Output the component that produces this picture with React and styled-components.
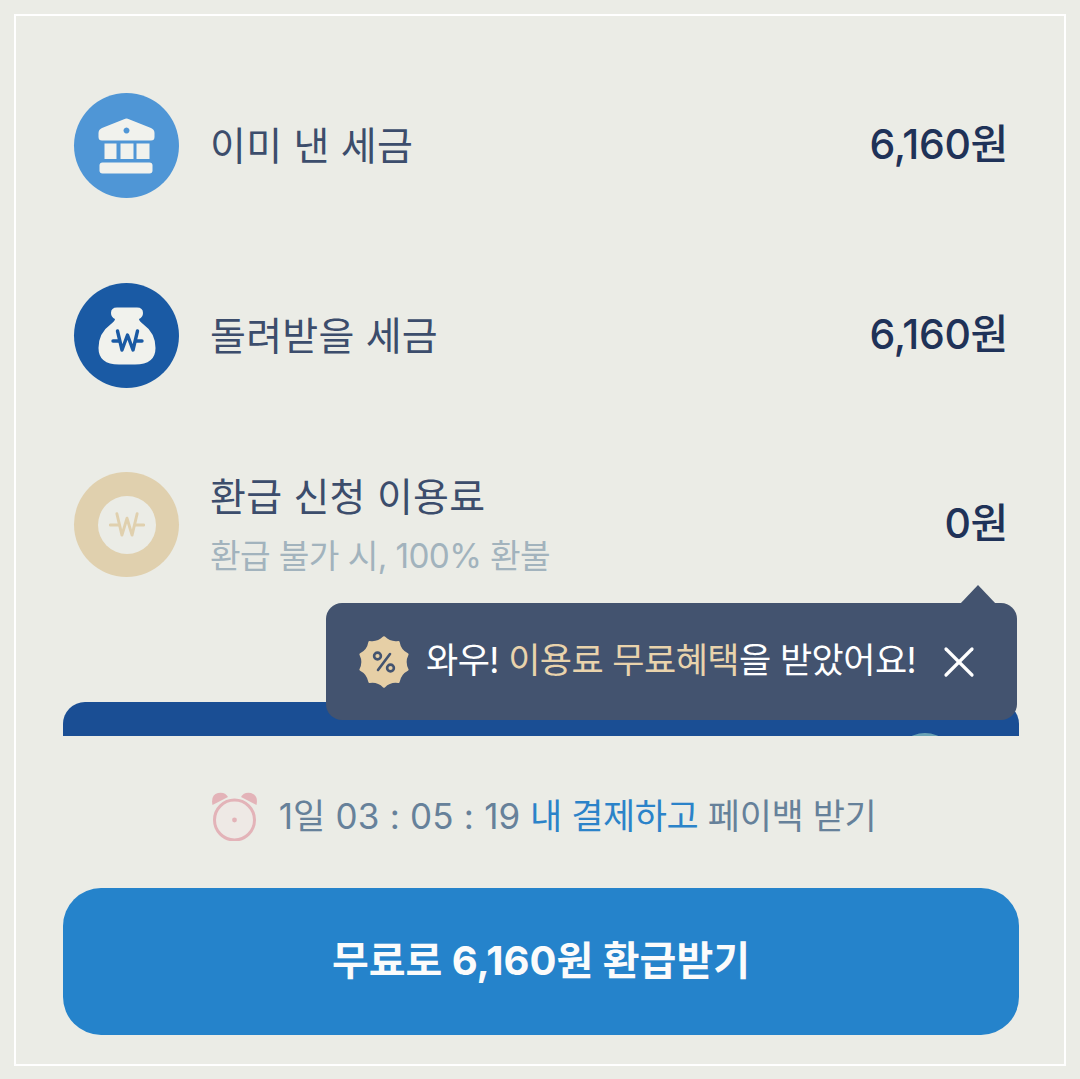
import styled, { createGlobalStyle } from "styled-components";
import { X } from "lucide-react";

const GlobalStyle = createGlobalStyle`
html, body {
    margin: 0;
    padding: 0;
    background: #ebece6;
}
* { box-sizing: border-box; }
`

const Page = styled.div`
width: 1080px;
height: 1079px;
padding: 14px 14px 13px 14px;
background: #ebece6;
font-family: Inter, "Noto Sans CJK KR", sans-serif;
`

const Frame = styled.div`
position: relative;
width: 100%;
height: 100%;
border: 2px solid #fff;
padding: 77px 45px 0 47px;
display: flex;
flex-direction: column;
`

const List = styled.div`
display: flex;
flex-direction: column;
gap: 85px;
padding: 0 11px 0 11px;
`

const Row = styled.div`
display: flex;
align-items: center;
gap: 31px;
height: 105px;
&:last-child {
    margin-top: -1px;
}
`

const Badge = styled.div`
width: 105px;
height: 105px;
flex: none;
border-radius: 50%;
background: ${(props) => props.color};
display: flex;
align-items: center;
justify-content: center;
`

const InnerBadge = styled(Badge)`
width: 58px;
height: 58px;
`

const Labels = styled.div`
flex: 1;
display: flex;
flex-direction: column;
gap: 16px;
`

const Label = styled.div`
font-size: 39px;
line-height: 46px;
color: #3c4d6c;
letter-spacing: 0.25px;
`

const SubLabel = styled.div`
font-size: 33.3px;
line-height: 40px;
color: #a2b3bd;
letter-spacing: -0.6px;
`

const Amount = styled.div`
font-size: 41px;
line-height: 50px;
padding-bottom: 4px;
font-weight: 450;
color: #1f3258;
letter-spacing: -0.3px;
`

const Panel = styled.div`
margin-top: 125px;
height: 34px;
border-radius: 22px 22px 0 0;
background: #1a4e94;
position: relative;
overflow: hidden;
`

const PanelArc = styled.span`
position: absolute;
left: 832px;
top: 31px;
width: 60px;
height: 60px;
border-radius: 50%;
background: #6aa3b5;
`

const Toast = styled.div`
position: absolute;
left: 310px;
right: 47px;
top: 587px;
height: 117px;
padding: 0 32px 0 32px;
border-radius: 16px;
background: #43536f;
display: flex;
align-items: center;
gap: 16px;
&::before {
    content: "";
    position: absolute;
    right: 21px;
    top: -18px;
    border-left: 18px solid transparent;
    border-right: 18px solid transparent;
    border-bottom: 19px solid #43536f;
}
`

const ToastText = styled.div`
flex: 1;
font-size: 35px;
line-height: 44px;
padding-bottom: 4px;
color: #fff;
white-space: nowrap;
letter-spacing: -0.55px;
`

const Accent = styled.span`
color: #e9d3ac;
`

const Timer = styled.div`
margin-top: 55px;
height: 50px;
padding-left: 5px;
display: flex;
align-items: center;
justify-content: center;
gap: 20px;
font-size: 35px;
color: #66819a;
letter-spacing: -0.4px;
`

const TimerCopy = styled.span`
padding-bottom: 6px;
`

const Clock = styled.span`
letter-spacing: 0.2px;
`

const TimerLink = styled.span`
color: #2b83c9;
`

const CtaButton = styled.button`
margin-top: 47px;
height: 147px;
padding: 0 0 8px;
border: none;
border-radius: 38px;
background: #2583cb;
color: #fbfbfb;
font-family: inherit;
font-size: 40px;
font-weight: 700;
`

function BankIcon() {
    return (
        <svg width="60" height="60" viewBox="0 0 60 60">
            <path fill="#f1f2ed" fillRule="evenodd" d="M27 3.2 Q29.5 2 32 3.2 L54 12 Q57.5 13.5 57.5 17 V21 Q57.5 24.5 54 24.5 H5 Q1.5 24.5 1.5 21 V17 Q1.5 13.5 5 12 Z M29.5 11.5 a3 3 0 1 0 .01 0 Z" />
            <rect x="7.5" y="27.5" width="12" height="15.5" fill="#f1f2ed" />
            <rect x="23.5" y="27.5" width="13" height="15.5" fill="#f1f2ed" />
            <rect x="39.5" y="27.5" width="13" height="15.5" fill="#f1f2ed" />
            <rect x="2.5" y="46.5" width="53" height="11" rx="3" fill="#f1f2ed" />
        </svg>
    )
}

// won sign with the bar only sticking out either side of the W
function WonSign({ color, width, size }) {
    return (
        <svg width={size} height={size} viewBox="0 0 32 32" fill="none" stroke={color} strokeWidth={width} strokeLinejoin="round" strokeLinecap="round">
            <path d="M7 6 L11.5 25 L16 10 L20.5 25 L25 6" />
            <path d="M1 16 H8.5" />
            <path d="M23.5 16 H31" />
        </svg>
    )
}

function MoneyBagIcon() {
    return (
        <svg width="60" height="60" viewBox="0 0 60 60">
            <path fill="#f1f2ed" d="M20 1.5 H40 Q46 1.5 46 7 Q46 11 42 13 Q42 15 46 18 Q58.5 27 58.5 42 Q58.5 58.5 38 58.5 H22 Q1.5 58.5 1.5 42 Q1.5 27 14 18 Q18 15 18 13 Q14 11 14 7 Q14 1.5 20 1.5 Z" />
            <g fill="none" stroke="#1a5aa4" strokeWidth="3.4" strokeLinejoin="round" strokeLinecap="round">
                <path d="M20.5 25 L25 44 L30.5 29 L36 44 L40.5 25" />
                <path d="M16 35 H22" />
                <path d="M39 35 H45" />
            </g>
        </svg>
    )
}

function AlarmIcon() {
    return (
        <svg width="48" height="50" viewBox="0 0 48 50" fill="none">
            <circle cx="23.5" cy="29" r="20" stroke="#e3b3b8" strokeWidth="3" fill="#eee9e5" />
            <circle cx="23.5" cy="29" r="2.4" fill="#e3b3b8" />
            <path fill="#e3b3b8" d="M1.5 14 Q-0.5 4 7 2 Q14 0.5 17 6 Z" />
            <path fill="#e3b3b8" d="M45.5 14 Q47.5 4 40 2 Q33 0.5 30 6 Z" />
        </svg>
    )
}

// seal outline: ten soft points joined by shallow concave curves
function sealPath(points, outer, valley) {
    const at = (r, a) => `${(26 + r * Math.sin(a)).toFixed(2)} ${(26 - r * Math.cos(a)).toFixed(2)}`
    const step = (Math.PI * 2) / points
    let d = `M${at(outer, 0)}`
    for (let i = 0; i < points; i++) {
        d += ` Q${at(valley, i * step + step / 2)} ${at(outer, (i + 1) * step)}`
    }
    return d + " Z"
}

function PercentSeal() {
    return (
        <svg width="52" height="52" viewBox="0 0 52 52">
            <path fill="#e6cfa6" stroke="#e6cfa6" strokeWidth="2.5" strokeLinejoin="round" d={sealPath(10, 24.5, 19.5)} />
            <g fill="none" stroke="#43536f" strokeWidth="2.6" strokeLinecap="round">
                <circle cx="19.5" cy="20" r="3.4" />
                <circle cx="32.5" cy="32" r="3.4" />
                <path d="M32 18 L20 34" />
            </g>
        </svg>
    )
}

export default function App() {
    return (
        <Page>
            <GlobalStyle />
            <Frame>
                <List>
                    <Row>
                        <Badge color="#4f96d6"><BankIcon /></Badge>
                        <Labels><Label>이미 낸 세금</Label></Labels>
                        <Amount>6,160원</Amount>
                    </Row>
                    <Row>
                        <Badge color="#1a5aa4"><MoneyBagIcon /></Badge>
                        <Labels><Label>돌려받을 세금</Label></Labels>
                        <Amount>6,160원</Amount>
                    </Row>
                    <Row>
                        <Badge color="#e0d0ae">
                            <InnerBadge color="#ebece6">
                                <WonSign color="#e0d0ae" width={2.6} size={36} />
                            </InnerBadge>
                        </Badge>
                        <Labels>
                            <Label>환급 신청 이용료</Label>
                            <SubLabel>환급 불가 시, 100% 환불</SubLabel>
                        </Labels>
                        <Amount>0원</Amount>
                    </Row>
                </List>
                <Panel><PanelArc /></Panel>
                <Toast>
                    <PercentSeal />
                    <ToastText>와우! <Accent>이용료 무료혜택</Accent>을 받았어요!</ToastText>
                    <X size={52} color="#fff" strokeWidth={1.5} />
                </Toast>
                <Timer>
                    <AlarmIcon />
                    <TimerCopy><Clock>1일 03 : 05 : 19</Clock> <TimerLink>내 결제하고</TimerLink> 페이백 받기</TimerCopy>
                </Timer>
                <CtaButton>무료로 6,160원 환급받기</CtaButton>
            </Frame>
        </Page>
    )
}
